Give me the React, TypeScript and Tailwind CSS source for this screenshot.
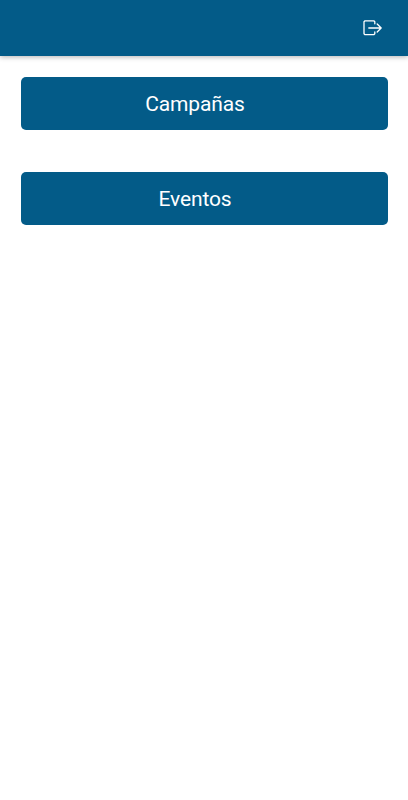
const sections = ['Campañas', 'Eventos'];

function ExitIcon() {
    return (
        <svg
            width="20"
            height="18"
            viewBox="0 0 20 18"
            fill="none"
            stroke="currentColor"
            strokeWidth="1.3"
            strokeLinecap="round"
            strokeLinejoin="round"
        >
            <path d="M11.8 4.8V2.8L10.8 1.8H2L1 2.8V14.7L2 15.7H10.8L11.8 14.7V13" />
            <path d="M5.8 9H18.2M14.2 5L18.2 9L14.2 13" />
        </svg>
    );
}

export default function App() {
    return (
        <main className="min-h-screen bg-white text-white font-['Roboto',sans-serif]">
            <header className="flex h-14 items-center justify-end bg-[#035b88] pr-[25px] shadow-[0_1px_5px_rgba(0,0,0,0.3)]">
                <button aria-label="Salir">
                    <ExitIcon />
                </button>
            </header>

            <div className="flex flex-col gap-[42px] px-[20.5px] pt-[21px]">
                {sections.map((section) => (
                    <button
                        key={section}
                        className="h-[53px] rounded-[5px] bg-[#035b88] pt-[2px] pr-[18px] text-[21px] tracking-[-0.15px]"
                    >
                        {section}
                    </button>
                ))}
            </div>
        </main>
    );
}
